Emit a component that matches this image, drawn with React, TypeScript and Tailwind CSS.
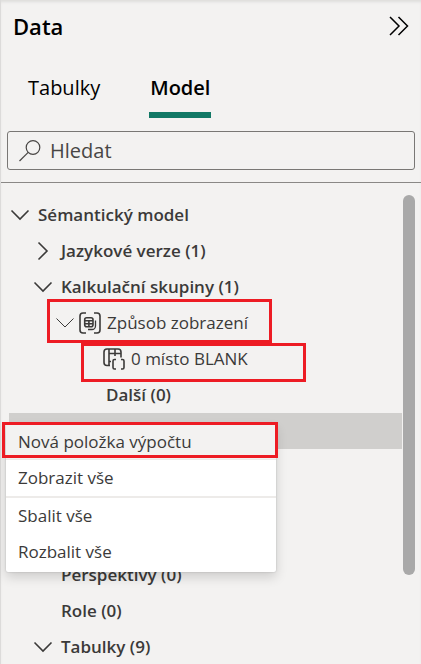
import React, { useState } from 'react';
import clsx from 'clsx';

type IconProps = { className?: string };

const ChevronDown: React.FC<IconProps> = ({ className }) => (
  <svg viewBox="0 0 20 20" fill="none" stroke="currentColor" aria-hidden="true" className={clsx('w-5 h-5 shrink-0', className)}>
    <path d="M1.5 5.5 10 14l8.5-8.5" />
  </svg>
);

const ChevronRight: React.FC<IconProps> = ({ className }) => (
  <svg viewBox="0 0 20 20" fill="none" stroke="currentColor" aria-hidden="true" className={clsx('w-5 h-5 shrink-0', className)}>
    <path d="M5.5 1.5 14 10l-8.5 8.5" />
  </svg>
);

const CollapseIcon: React.FC = () => (
  <svg viewBox="0 0 20 20" fill="none" stroke="currentColor" strokeWidth="1.5" aria-hidden="true" className="w-5 h-5">
    <path d="M1 1l9 9-9 9M9.500 1l9 9-9 9" />
  </svg>
);

const SearchIcon: React.FC = () => (
  <svg viewBox="0 0 24 24" fill="none" stroke="currentColor" strokeWidth="1.2" aria-hidden="true" className="w-6 h-6">
    <circle cx="15" cy="8.5" r="6.8" />
    <path d="M10.200 13.300 1.500 22" />
  </svg>
);

const CalculationGroupIcon: React.FC = () => (
  <svg viewBox="0 0 22 22" fill="none" stroke="currentColor" strokeWidth="1.6" aria-hidden="true" className="w-[22px] h-[22px] shrink-0">
    <path d="M7 1H4a3 3 0 0 0-3 3v14a3 3 0 0 0 3 3h3M15 1h3a3 3 0 0 1 3 3v14a3 3 0 0 1-3 3h-3" />
    <rect x="5.7" y="5.7" width="8.3" height="9" rx="2" />
    <path d="M5.700 8.700H14M5.700 11.700H14M9.900 8.700v6" />
    <path d="M16.500 8.500V14a3.500 3.500 0 0 1-3.500 3.500H9" strokeWidth="1.3" />
  </svg>
);

const CalculationItemIcon: React.FC = () => (
  <svg viewBox="0 0 22 22" fill="none" stroke="currentColor" strokeWidth="1.6" aria-hidden="true" className="w-[22px] h-[22px] shrink-0">
    <path d="M7 17.500H4a3 3 0 0 1-3-3V4a3 3 0 0 1 3-3h11a3 3 0 0 1 3 3v5.500" />
    <path d="M6 1v16.500M6 5.500h12M12 1v7M6 13.500h2" />
    <path d="M13 11.500h-1.500a1.500 1.500 0 0 0-1.500 1.500v6.500a1.500 1.500 0 0 0 1.500 1.500H13M18 11.500h1.500a1.500 1.500 0 0 1 1.500 1.500v6.500a1.500 1.500 0 0 1-1.500 1.500H18" />
  </svg>
);

const Highlight: React.FC<{ className: string }> = ({ className }) => (
  <span aria-hidden="true" className={clsx('absolute border-3 border-[#ed1c24] pointer-events-none', className)} />
);

const rowClass = 'relative flex items-center w-full h-9 text-left whitespace-nowrap';

const tabs = ['Tabulky', 'Model'];

const App: React.FC = () => {
  const [activeTab, setActiveTab] = useState('Model');
  const [query, setQuery] = useState('');

  return (
    <div className="min-h-screen bg-[#f3f2f1] border-l border-[#dcdbda] font-['Open_Sans','Noto_Sans',sans-serif] text-[#3b3a39] shadow-[inset_0_3px_3px_-1px_#dedddc]">
      <header className="flex items-center justify-between h-13 px-3">
        <h1 className="text-[22px] font-semibold text-black">Data</h1>
        <button type="button" aria-label="Sbalit" className="text-black">
          <CollapseIcon />
        </button>
      </header>

      <div role="tablist" className="flex h-[79px] gap-12 pl-[26px] pt-5">
        {tabs.map(tab => (
          <button
            key={tab}
            type="button"
            role="tab"
            aria-selected={tab === activeTab}
            onClick={() => setActiveTab(tab)}
            className={clsx(
              'flex flex-col h-[46px] justify-between text-xl leading-8 text-black',
              tab === activeTab && 'font-semibold'
            )}
          >
            <span className="px-px">{tab}</span>
            <span className={clsx('w-full h-[6px]', tab === activeTab && 'bg-[#117865]')} />
          </button>
        ))}
      </div>

      <label className="flex items-center h-[39px] mx-[6px] pl-[10px] gap-2 border border-[#797775] rounded-[3px] text-[#484644]">
        <SearchIcon />
        <input
          type="text"
          aria-label="Hledat"
          placeholder="Hledat"
          value={query}
          onChange={e => setQuery(e.target.value)}
          className="flex-1 min-w-0 bg-transparent text-xl outline-none placeholder:text-[#484644]"
        />
      </label>

      <div className="relative flex mt-3 pt-3 border-t border-[#8a8886]">
        <div className="flex-1 min-w-0 pl-2 pt-[2px] text-[17px] font-semibold">
          <button type="button" className={clsx(rowClass, 'gap-2 pl-px')}>
            <ChevronDown className="stroke-[1.6]" />
            Sémantický model
          </button>
          <button type="button" className={clsx(rowClass, 'gap-2 pl-6')}>
            <ChevronRight className="stroke-[1.6]" />
            Jazykové verze (1)
          </button>
          <button type="button" className={clsx(rowClass, 'gap-2 pl-6')}>
            <ChevronDown className="stroke-[1.6]" />
            Kalkulační skupiny (1)
          </button>
          <button type="button" className={clsx(rowClass, 'gap-1 pl-[46px] font-normal')}>
            <ChevronDown className="stroke-1" />
            <CalculationGroupIcon />
            <span className="pl-[2px]">Způsob zobrazení</span>
            <Highlight className="left-[38px] -top-[6px] w-[225px] h-11" />
          </button>
          <button type="button" className={clsx(rowClass, 'gap-1 pl-[94px] font-normal')}>
            <CalculationItemIcon />
            <span className="pl-[2px]">0 místo BLANK</span>
            <Highlight className="left-[72px] top-[2px] w-[225px] h-[39px]" />
          </button>
          <button type="button" className={clsx(rowClass, 'pl-[97px]')}>Další (0)</button>

          <div className="relative h-36">
            <div className="h-9 bg-[#d0cfcd]" />
            <div role="menu" className="absolute -left-[3px] top-[11px] w-[270px] pb-[2px] bg-white font-normal rounded-[2px] shadow-[0_5px_12px_rgba(0,0,0,0.16),0_0_2px_rgba(0,0,0,0.2)] z-10">
              <button type="button" role="menuitem" className={clsx(rowClass, 'pl-3 bg-[#f3f2f1] border-b border-[#edebe9]')}>
                Nová položka výpočtu
                <Highlight className="-left-1 -top-[2px] w-[276px] h-9" />
              </button>
              <button type="button" role="menuitem" className={clsx(rowClass, 'pl-3')}>Zobrazit vše</button>
              <div className="h-[2px] bg-[#edebe9]" />
              <button type="button" role="menuitem" className={clsx(rowClass, 'pl-3')}>Sbalit vše</button>
              <button type="button" role="menuitem" className={clsx(rowClass, 'pl-3')}>Rozbalit vše</button>
            </div>
          </div>

          <button type="button" className={clsx(rowClass, 'pl-[52px]')}>Perspektivy (0)</button>
          <button type="button" className={clsx(rowClass, 'pl-[52px]')}>Role (0)</button>
          <button type="button" className={clsx(rowClass, 'gap-2 pl-6 -mb-1')}>
            <ChevronDown className="stroke-[1.6]" />
            Tabulky (9)
          </button>
        </div>
        <div className="w-3 h-[380px] ml-px mr-[6px] rounded-full bg-[#a9a9a9]" />
      </div>
    </div>
  );
};

export default App;
